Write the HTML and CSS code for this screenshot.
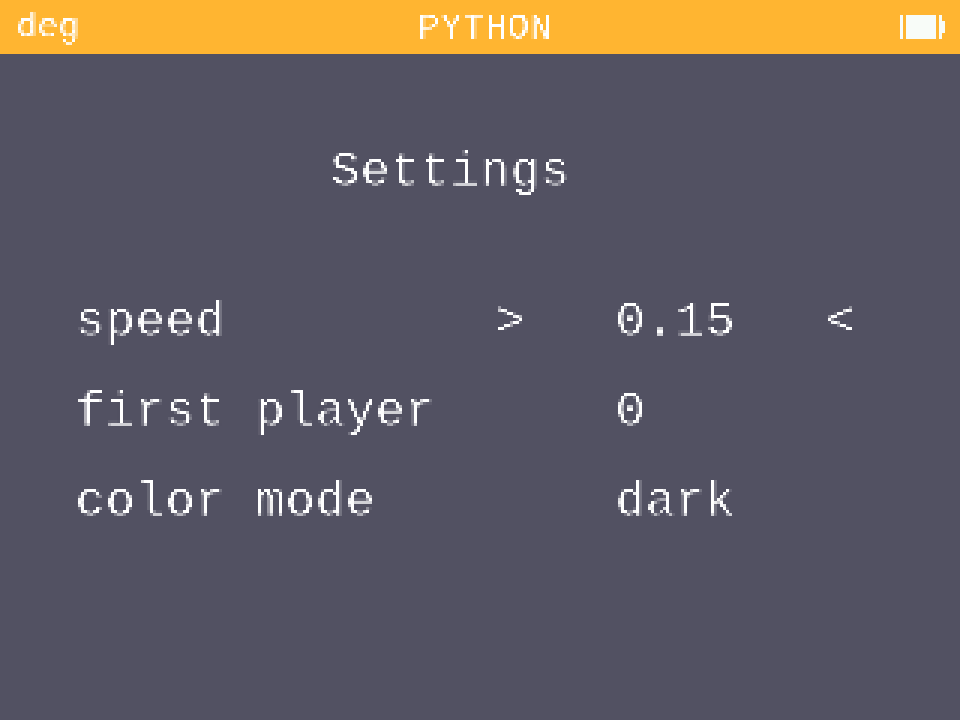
FILE: index.html
```html
<!DOCTYPE html>
<html lang="en">
<head>
<meta charset="utf-8">
<title>Python</title>
<link rel="stylesheet" href="styles.css">
</head>
<body>
<svg class="defs" width="0" height="0" aria-hidden="true">
  <!-- Samples the text once per 3px cell, for the look of a 320x240 display -->
  <filter id="lcd" filterUnits="userSpaceOnUse" primitiveUnits="userSpaceOnUse" x="0" y="0" width="960" height="720" color-interpolation-filters="sRGB">
    <feGaussianBlur in="SourceGraphic" stdDeviation="0.4" result="soft"/>
    <feFlood x="1" y="1" width="1" height="1" flood-color="#000" result="dot"/>
    <feOffset in="dot" x="0" y="0" width="3" height="3" result="unit"/>
    <feTile in="unit" result="grid"/>
    <feComposite in="soft" in2="grid" operator="in"/>
    <feMorphology operator="dilate" radius="1"/>
  </filter>
</svg>
<header class="bar">
  <span class="unit">deg</span>
  <span class="app">PYTHON</span>
  <svg class="battery" width="45" height="24" viewBox="0 0 45 24" shape-rendering="crispEdges" aria-hidden="true">
    <path fill="#f8fcf8" d="M0 0h3v24H0zM6 0h30v24H6zM39 0h3v6h3v12h-3v6h-3z"/>
  </svg>
</header>
<main class="screen">
  <h1 class="title">Settings</h1>
  <div class="options">
    <div class="row"><span>speed</span><span>&gt;</span><span>0.15</span><span>&lt;</span></div>
    <div class="row"><span>first player</span><span></span><span>0</span><span></span></div>
    <div class="row"><span>color mode</span><span></span><span>dark</span><span></span></div>
  </div>
</main>
</body>
</html>
```
FILE: styles.css
```css
* { box-sizing: border-box; }
body {
  margin: 0;
  height: 720px;
  overflow: hidden;
  background: #525162;
  color: #fff;
  font-family: "Liberation Mono", monospace;
}
.defs { display: block; height: 0; }
.bar {
  height: 54px;
  padding: 0 15px;
  display: grid;
  grid-template-columns: 402px 1fr 45px;
  background: #ffb531;
}
.unit {
  padding-left: 1.5px;
  font-size: 35px;
  line-height: 56px;
  filter: url(#lcd);
}
.app {
  padding-left: 1px;
  font-size: 36px;
  line-height: 57px;
  letter-spacing: 0.8px;
  filter: url(#lcd);
}
.battery { margin-top: 15px; }
.screen {
  height: 666px;
  padding: 91px 0 0 75.5px;
  font-size: 49px;
  line-height: 54px;
  letter-spacing: 0.6px;
  -webkit-text-stroke: 0.6px #525162;
  filter: url(#lcd);
}
.title {
  margin: 0 0 0 255px;
  font-size: inherit;
  font-weight: 400;
}
.options {
  margin-top: 96px;
  display: grid;
  gap: 36px;
}
.row {
  height: 54px;
  display: grid;
  grid-template-columns: 420px 120px 210px 60px;
  white-space: pre;
}
```
